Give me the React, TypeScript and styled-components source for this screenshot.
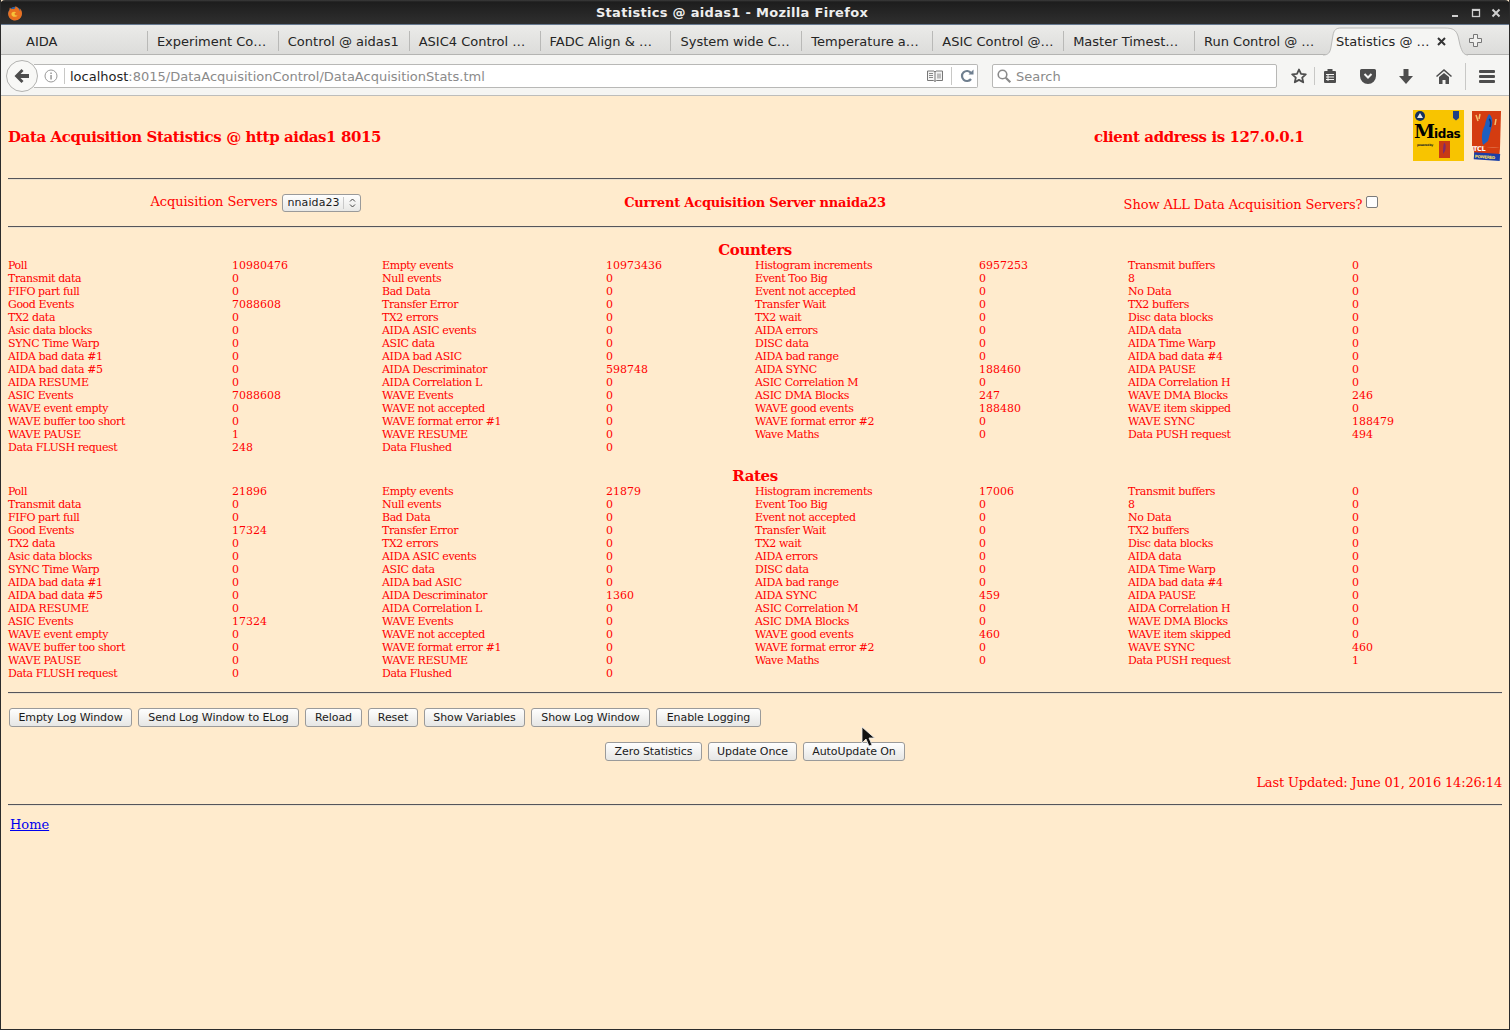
import React from "react";
import styled, { createGlobalStyle } from "styled-components";

const Global = createGlobalStyle`
  html, body { margin: 0; padding: 0; background: #2a2a2a; }
  #root { width: 1510px; height: 1030px; overflow: hidden; }
`;

const Win = styled.div`
  position: relative;
  box-sizing: border-box;
  width: 1510px;
  height: 1030px;
  display: flex;
  flex-direction: column;
  border-left: 1px solid #2b2b2b;
  border-right: 1px solid #2b2b2b;
  border-bottom: 1px solid #2b2b2b;
  background: #ffebcd;
  overflow: hidden;
  font-family: "DejaVu Sans", sans-serif;
`;
const TitleBar = styled.div`
  height: 25px;
  flex: none;
  box-sizing: border-box;
  margin: 0 -1px;
  padding: 1px 9px 0 7px;
  display: grid;
  grid-template-columns: 16px 1fr 54px;
  align-items: center;
  background: linear-gradient(#3c3c3c 0, #1d1d1d 2px, #2f2f2f 100%);
  border-bottom: 1px solid #66788f;
  border-radius: 5px 5px 0 0;
  color: #eeeeee;
`;
const Title = styled.div`
  text-align: center;
  font-weight: 700;
  font-size: 13px;
  padding-right: 6px;
  letter-spacing: 0.3px;
`;
const WinButtons = styled.div`
  display: flex;
  justify-content: space-between;
  align-items: center;
  padding-left: 4px;
`;
const TabStrip = styled.div`
  height: 30px;
  flex: none;
  box-sizing: border-box;
  display: flex;
  align-items: stretch;
  padding-left: 15px;
  background: linear-gradient(#ebebe9, #dcdcda);
  border-bottom: 1px solid #b4b4b2;
  position: relative;
`;
const Tab = styled.div<{ $last?: boolean }>`
  width: 130.9px;
  box-sizing: border-box;
  padding: 3px 0 0 9px;
  display: flex;
  align-items: center;
  font-size: 13px;
  color: #252525;
  white-space: nowrap;
  overflow: hidden;
  position: relative;
  &:first-child {
    width: 131.9px;
    padding-left: 10px;
  }
  &::after {
    content: "";
    display: ${(p) => (p.$last ? "none" : "block")};
    position: absolute;
    right: 0;
    top: 6px;
    bottom: 3px;
    width: 1px;
    background: #b9b9b7;
  }
`;
const ActiveTab = styled.div`
  width: 134px;
  box-sizing: border-box;
  padding: 3px 14px 0 10px;
  display: flex;
  align-items: center;
  justify-content: space-between;
  font-size: 13px;
  color: #252525;
  white-space: nowrap;
  position: relative;
`;
const TabShape = styled.svg`
  position: absolute;
  left: -3px;
  top: 2px;
`;
const TabLabel = styled.span`
  position: relative;
`;
const TabClose = styled.svg`
  position: relative;
`;
const NewTab = styled.div`
  width: 31px;
  display: flex;
  align-items: center;
  justify-content: center;
  padding-top: 2px;
`;
const NavBar = styled.div`
  height: 41px;
  flex: none;
  box-sizing: border-box;
  display: flex;
  align-items: center;
  padding: 2px 0 0 5px;
  background: #f5f5f3;
  border-bottom: 1px solid #bdbdbb;
`;
const BackCircle = styled.div`
  width: 32px;
  height: 32px;
  flex: none;
  box-sizing: border-box;
  border-radius: 50%;
  border: 1px solid #b2b2b0;
  background: #f8f8f6;
  display: flex;
  align-items: center;
  justify-content: center;
  z-index: 1;
`;
const UrlBar = styled.div`
  margin-left: -4px;
  width: 944px;
  height: 24px;
  box-sizing: border-box;
  display: flex;
  align-items: center;
  background: #fff;
  border: 1px solid #b8b8b6;
  border-left: none;
  border-radius: 0 2px 2px 0;
  padding-left: 10px;
  font-size: 13px;
  white-space: nowrap;
`;
const Host = styled.span`
  color: #1e1e1e;
`;
const Path = styled.span`
  color: #8a8a8a;
`;
const Sep = styled.div<{ $h?: number; $m?: string }>`
  width: 1px;
  height: ${(p) => p.$h ?? 18}px;
  background: #c8c8c6;
  flex: none;
  margin: ${(p) => p.$m ?? "0"};
`;
const UrlText = styled.div`
  flex: 1;
  padding-left: 5px;
`;
const SearchBox = styled.div`
  margin-left: 14px;
  width: 285px;
  height: 24px;
  box-sizing: border-box;
  display: flex;
  align-items: center;
  gap: 4px;
  padding-left: 3px;
  background: #fff;
  border: 1px solid #b8b8b6;
  border-radius: 2px;
  font-size: 13px;
  color: #8a8a8a;
`;
const Tools = styled.div`
  display: flex;
  align-items: center;
  height: 100%;
  padding-left: 7px;
`;
const ToolSlot = styled.div<{ $w: number; $pl?: number }>`
  width: ${(p) => p.$w}px;
  box-sizing: border-box;
  padding-left: ${(p) => p.$pl ?? 0}px;
  display: flex;
  justify-content: center;
  align-items: center;
  flex: none;
`;

const Page = styled.div`
  flex: 1;
  padding: 0 7px;
  font-family: "DejaVu Serif", serif;
  color: #ff0000;
`;
const Header = styled.div`
  height: 82px;
  display: grid;
  grid-template-columns: 1086px 1fr auto;
  align-items: center;
  font-weight: 700;
  font-size: 15px;
  letter-spacing: -0.4px;
`;
const Logos = styled.div`
  display: flex;
  gap: 7px;
  align-items: flex-start;
  margin-bottom: 4px;
`;
const Rule = styled.hr`
  margin: 0;
  border: none;
  height: 1px;
  background: #55555a;
  box-shadow: 0 1px 0 #ece0cc;
`;
const ServerRow = styled.div`
  height: 47px;
  display: grid;
  grid-template-columns: repeat(3, 1fr);
  align-items: center;
  font-size: 13px;
`;
const ServerCell = styled.div<{ $shift?: number; $pr?: number }>`
  display: flex;
  justify-content: center;
  align-items: center;
  gap: 5px;
  white-space: nowrap;
  letter-spacing: -0.1px;
  padding-right: ${(p) => p.$pr ?? 0}px;
  transform: translateY(${(p) => p.$shift ?? 0}px);
`;
const Strong = styled.b`
  font-size: 13px;
  letter-spacing: -0.2px;
`;
const Select = styled.div`
  width: 79px;
  height: 18px;
  box-sizing: border-box;
  display: flex;
  align-items: center;
  font-family: "DejaVu Sans", sans-serif;
  font-size: 11px;
  letter-spacing: 0.1px;
  color: #1a1a1a;
  background: linear-gradient(#fefefe, #e8e8e6);
  border: 1px solid #9a9a9a;
  border-radius: 3px;
  padding-left: 4px;
  transform: translateY(1px);
`;
const SelectSep = styled.div`
  width: 1px;
  height: 12px;
  background: #c9c9c9;
  margin: 0 5px 0 3px;
`;
const Check = styled.div`
  width: 12px;
  height: 12px;
  box-sizing: border-box;
  background: #fdfdfd;
  border: 1px solid #7b7b7b;
  border-radius: 2px;
  transform: translateY(-3px);
  margin-left: -1px;
`;
const Heading = styled.div`
  text-align: center;
  font-weight: 700;
  font-size: 15px;
  letter-spacing: -0.4px;
  line-height: 18px;
`;
const Stats = styled.div`
  display: grid;
  grid-template-columns: 224px 150px 224px 149px 224px 149px 224px 150px;
  grid-auto-rows: 13px;
  font-size: 11px;
  line-height: 13px;
  white-space: nowrap;
`;
const StatLabel = styled.span`
  letter-spacing: -0.4px;
`;
const CountersBlock = styled.div`
  padding-top: 14px;
`;
const RatesBlock = styled.div`
  padding: 13px 0 12px;
`;
const ButtonRow = styled.div<{ $center?: boolean }>`
  display: flex;
  gap: 6px;
  justify-content: ${(p) => (p.$center ? "center" : "flex-start")};
  padding-left: ${(p) => (p.$center ? 0 : 1)}px;
`;
const Btn = styled.div<{ $w: number }>`
  width: ${(p) => p.$w}px;
  height: 19px;
  box-sizing: border-box;
  display: flex;
  align-items: center;
  justify-content: center;
  font-family: "DejaVu Sans", sans-serif;
  font-size: 11px;
  letter-spacing: -0.08px;
  color: #1a1a1a;
  background: linear-gradient(#fefefe, #e6e6e4);
  border: 1px solid #9a9a9a;
  border-radius: 3px;
  white-space: nowrap;
`;
const Buttons = styled.div`
  display: flex;
  flex-direction: column;
  gap: 15px;
  padding-top: 15px;
`;
const Updated = styled.div`
  text-align: right;
  font-size: 13px;
  letter-spacing: -0.17px;
  line-height: 16px;
  padding-top: 14px;
  height: 43px;
  box-sizing: border-box;
`;
const HomeLink = styled.a`
  display: block;
  margin: 12px 0 0 2px;
  font-size: 13px;
  line-height: 16px;
  color: #0000ee;
  text-decoration: underline;
`;
const Cursor = styled.svg`
  position: absolute;
  left: 860px;
  top: 726px;
`;

const counters: [string, string][][] = [
  [["Poll", "10980476"], ["Empty events", "10973436"], ["Histogram increments", "6957253"], ["Transmit buffers", "0"]],
  [["Transmit data", "0"], ["Null events", "0"], ["Event Too Big", "0"], ["8", "0"]],
  [["FIFO part full", "0"], ["Bad Data", "0"], ["Event not accepted", "0"], ["No Data", "0"]],
  [["Good Events", "7088608"], ["Transfer Error", "0"], ["Transfer Wait", "0"], ["TX2 buffers", "0"]],
  [["TX2 data", "0"], ["TX2 errors", "0"], ["TX2 wait", "0"], ["Disc data blocks", "0"]],
  [["Asic data blocks", "0"], ["AIDA ASIC events", "0"], ["AIDA errors", "0"], ["AIDA data", "0"]],
  [["SYNC Time Warp", "0"], ["ASIC data", "0"], ["DISC data", "0"], ["AIDA Time Warp", "0"]],
  [["AIDA bad data #1", "0"], ["AIDA bad ASIC", "0"], ["AIDA bad range", "0"], ["AIDA bad data #4", "0"]],
  [["AIDA bad data #5", "0"], ["AIDA Descriminator", "598748"], ["AIDA SYNC", "188460"], ["AIDA PAUSE", "0"]],
  [["AIDA RESUME", "0"], ["AIDA Correlation L", "0"], ["ASIC Correlation M", "0"], ["AIDA Correlation H", "0"]],
  [["ASIC Events", "7088608"], ["WAVE Events", "0"], ["ASIC DMA Blocks", "247"], ["WAVE DMA Blocks", "246"]],
  [["WAVE event empty", "0"], ["WAVE not accepted", "0"], ["WAVE good events", "188480"], ["WAVE item skipped", "0"]],
  [["WAVE buffer too short", "0"], ["WAVE format error #1", "0"], ["WAVE format error #2", "0"], ["WAVE SYNC", "188479"]],
  [["WAVE PAUSE", "1"], ["WAVE RESUME", "0"], ["Wave Maths", "0"], ["Data PUSH request", "494"]],
  [["Data FLUSH request", "248"], ["Data Flushed", "0"]],
];
const rateValues: string[][] = [
  ["21896", "21879", "17006", "0"],
  ["0", "0", "0", "0"],
  ["0", "0", "0", "0"],
  ["17324", "0", "0", "0"],
  ["0", "0", "0", "0"],
  ["0", "0", "0", "0"],
  ["0", "0", "0", "0"],
  ["0", "0", "0", "0"],
  ["0", "1360", "459", "0"],
  ["0", "0", "0", "0"],
  ["17324", "0", "0", "0"],
  ["0", "0", "460", "0"],
  ["0", "0", "0", "460"],
  ["0", "0", "0", "1"],
  ["0", "0"],
];
const rates: [string, string][][] = counters.map((row, r) =>
  row.map((c, i) => [c[0], rateValues[r][i]] as [string, string])
);

const StatsGrid = ({ rows }: { rows: [string, string][][] }) => (
  <Stats>
    {rows.flat().map(([k, v], i) => (
      <React.Fragment key={i}>
        <StatLabel>{k}</StatLabel>
        <span>{v}</span>
      </React.Fragment>
    ))}
  </Stats>
);

const tabs = [
  "AIDA", "Experiment Co…", "Control @ aidas1", "ASIC4 Control …", "FADC Align & …",
  "System wide C…", "Temperature a…", "ASIC Control @…", "Master Timest…", "Run Control @ …",
];

const Firefox = () => (
  <svg width="16" height="16" viewBox="0 0 16 16">
    <circle cx="8" cy="8.500" r="6.800" fill="#2f5f9e" />
    <path d="M3 2.500c-.5 1-.6 2-.3 2.600C1.400 6.500 1 8 1.200 9.500 1.700 13 4.500 15.500 8 15.500c3.800 0 7-3 7-7 0-2-.8-3.800-2-5 .4 1.200.3 2.200 0 2.800C12.300 4.300 11 2.500 8.500 1c.2 1.500-.6 2.600-1.700 3.300-.7-.3-1.600-.3-2.300 0-.7-.4-1.300-1-1.500-1.800z" fill="#e8701f" />
    <path d="M5 7.500c1.500-1 3.500-.8 4.500.4C8.500 7.500 7.500 8 7.600 9c.1 1.200 1.700 2 3 1.300-1 1.800-4 2-5.300.6C4.200 10 4.200 8.500 5 7.500z" fill="#f6c33a" />
  </svg>
);

const Midas = () => (
  <svg width="51" height="51" viewBox="0 0 51 51">
    <rect width="51" height="51" fill="#f8c400" />
    <circle cx="7" cy="6" r="5" fill="#13315f" />
    <path d="M4 8l3-5 3 5z" fill="#e8e8e8" />
    <path d="M40 1h6v7l-3 2.500L40 8z" fill="#1f3f83" />
    <text x="1" y="27.500" fontFamily="'DejaVu Serif', serif" fontWeight="700" fontSize="19" fill="#000">M</text>
    <text x="21" y="27.500" fontFamily="'DejaVu Sans', sans-serif" fontWeight="700" fontSize="12" fill="#000">idas</text>
    <text x="4" y="36" fontFamily="'DejaVu Sans', sans-serif" fontWeight="700" fontSize="3" fill="#222">powered by</text>
    <rect x="26" y="31" width="11" height="17" fill="#c83a14" />
    <path d="M31 33c2 0 2 5 1 8l-2 3c0-4 0-8 1-11z" fill="#7d2a6c" />
  </svg>
);

const Tcl = () => (
  <svg width="31" height="51" viewBox="0 0 31 51">
    <path d="M1 1h29l-1 37-28-2z" fill="#d43c10" />
    <path d="M2 36l27 2-1 12-24-3z" fill="#d43c10" />
    <path d="M18 4c4 3 4 9 2 15l-3 12-5 4c-2-8-1-14 2-20 .6-4 2-8 4-11z" fill="#1e5fc0" />
    <path d="M18 9c2 1 2 5 1 8" stroke="#0c2c70" strokeWidth="1.500" fill="none" />
    <path d="M5 5l2 6M9 4l-1 5M25 9l-1 6" stroke="#f4c070" strokeWidth="1.500" />
    <text x="2" y="41" fontFamily="'DejaVu Sans', sans-serif" fontWeight="700" fontSize="6.500" fill="#fff">TCL</text>
    <rect x="3" y="43" width="26" height="7" fill="#1a3fa8" transform="rotate(4 15 46)" />
    <text x="4" y="48.500" fontFamily="'DejaVu Sans', sans-serif" fontWeight="700" fontSize="4" fill="#ffe060" transform="rotate(4 15 46)">POWERED</text>
  </svg>
);

const grey = "#4d4d4d";

export default function App() {
  return (
    <>
      <Global />
      <Win>
        <TitleBar>
          <Firefox />
          <Title>Statistics @ aidas1 - Mozilla Firefox</Title>
          <WinButtons>
            <svg width="10" height="10" viewBox="0 0 10 10"><rect x="1" y="7" width="6" height="2" fill="#cfcfcf" /></svg>
            <svg width="10" height="10" viewBox="0 0 10 10"><rect x="1.500" y="1.500" width="7" height="7" fill="none" stroke="#cfcfcf" strokeWidth="1.300" /><rect x="1" y="1" width="8" height="2" fill="#cfcfcf" /></svg>
            <svg width="10" height="10" viewBox="0 0 10 10"><path d="M1.500 1.500l7 7M8.500 1.500l-7 7" stroke="#cfcfcf" strokeWidth="2" /></svg>
          </WinButtons>
        </TitleBar>
        <TabStrip>
          {tabs.map((t, i) => (
            <Tab key={t} $last={i === tabs.length - 1}>{t}</Tab>
          ))}
          <ActiveTab>
            <TabShape width="145" height="29" viewBox="0 0 145 29">
              <path d="M0 28C5 28 7 26 8 20L10 8C11 3 13 1 18 1L122 1C130 1 133 3 135 9L137 18C139 25 141 28 145 28" fill="#f5f5f3" stroke="#b9b9b7" />
            </TabShape>
            <TabLabel>Statistics @ …</TabLabel>
            <TabClose width="9" height="9" viewBox="0 0 9 9"><path d="M1 1l7 7M8 1l-7 7" stroke="#333" strokeWidth="2" /></TabClose>
          </ActiveTab>
          <NewTab>
            <svg width="13" height="13" viewBox="0 0 13 13"><path d="M4.500.5h4v4h4v4h-4v4h-4v-4h-4v-4h4z" fill="#f0f0ee" stroke="#777" /></svg>
          </NewTab>
        </TabStrip>
        <NavBar>
          <BackCircle>
            <svg width="16" height="14" viewBox="0 0 16 14"><path d="M7.500 0l2 2-3 3H15v4H6.500l3 3-2 2L.5 7z" fill={grey} /></svg>
          </BackCircle>
          <UrlBar>
            <svg width="14" height="14" viewBox="0 0 14 14"><circle cx="7" cy="7" r="6" fill="none" stroke="#999" /><rect x="6.400" y="6" width="1.300" height="4.500" fill="#888" /><rect x="6.400" y="3.500" width="1.300" height="1.500" fill="#888" /></svg>
            <Sep $h={16} $m="0 0 0 6px" />
            <UrlText><Host>localhost</Host><Path>:8015/DataAcquisitionControl/DataAcquisitionStats.tml</Path></UrlText>
            <svg width="16" height="12" viewBox="0 0 16 12"><path d="M.5 1h6.500l1 1 1-1h6.500v9.500H9.500l-1.500 1-1.500-1H.5z" fill="#f4f4f4" stroke="#777" /><path d="M2 3.500h4M2 5.500h4M2 7.500h4" stroke="#888" /><path d="M8 2v9" stroke="#777" /><path d="M10 3.500h4v5h-4z" fill="#bbb" /></svg>
            <Sep $h={18} $m="0 0 0 8px" />
            <ToolSlot $w={25} $pl={4}>
              <svg width="14" height="14" viewBox="0 0 14 14"><path d="M11 10a5 5 0 1 1 0-6" fill="none" stroke="#6f7f8f" strokeWidth="2.200" /><path d="M8.500 5.500h5v-5z" fill="#6f7f8f" /></svg>
            </ToolSlot>
          </UrlBar>
          <SearchBox>
            <svg width="16" height="16" viewBox="0 0 16 16"><circle cx="6.500" cy="6.500" r="4.300" fill="none" stroke="#8a8a8a" strokeWidth="1.600" /><path d="M9.800 9.800l4.500 4.500" stroke="#8a8a8a" strokeWidth="2.200" /></svg>
            <span>Search</span>
          </SearchBox>
          <Tools>
            <ToolSlot $w={30}>
              <svg width="16" height="16" viewBox="0 0 16 16"><path d="M8 1.500l2 4.400 4.800.5-3.600 3.200 1 4.700L8 11.900l-4.200 2.400 1-4.700L1.200 6.400 6 5.900z" fill="none" stroke={grey} strokeWidth="1.800" strokeLinejoin="round" /></svg>
            </ToolSlot>
            <Sep $h={18} />
            <ToolSlot $w={30}>
              <svg width="14" height="16" viewBox="0 0 14 16"><rect x="1" y="3" width="12" height="12" rx="1" fill={grey} /><rect x="4.500" y="1" width="5" height="4" fill={grey} /><path d="M3 6.500h8M3 9h8M3 11.500h8" stroke="#f5f5f3" strokeWidth="1" /><path d="M5 6v7" stroke="#f5f5f3" /></svg>
            </ToolSlot>
            <ToolSlot $w={46}>
              <svg width="16" height="15" viewBox="0 0 16 15"><path d="M1.500 0h13A1.500 1.500 0 0 1 16 1.500V7a8 8 0 0 1-16 0V1.500A1.500 1.500 0 0 1 1.500 0z" fill={grey} /><path d="M4.500 5L8 8.500 11.500 5" fill="none" stroke="#f5f5f3" strokeWidth="2" /></svg>
            </ToolSlot>
            <ToolSlot $w={30}>
              <svg width="14" height="15" viewBox="0 0 14 15"><path d="M4.500 0h5v7H14l-7 8-7-8h4.500z" fill={grey} /></svg>
            </ToolSlot>
            <ToolSlot $w={46}>
              <svg width="16" height="15" viewBox="0 0 16 15"><path d="M8 0l8 7-1 1-7-6-7 6-1-1z" fill={grey} /><path d="M3 8l5-4 5 4v7H9.500v-4h-3v4H3z" fill={grey} /></svg>
            </ToolSlot>
            <Sep $h={27} $m="0 0 0 -2px" />
            <ToolSlot $w={42}>
              <svg width="16" height="13" viewBox="0 0 16 13"><rect width="16" height="3" rx="1" fill={grey} /><rect y="5" width="16" height="3" rx="1" fill={grey} /><rect y="10" width="16" height="3" rx="1" fill={grey} /></svg>
            </ToolSlot>
          </Tools>
        </NavBar>
        <Page>
          <Header>
            <span>Data Acquisition Statistics @ http aidas1 8015</span>
            <span>client address is 127.0.0.1</span>
            <Logos><Midas /><Tcl /></Logos>
          </Header>
          <Rule />
          <ServerRow>
            <ServerCell $shift={-1} $pr={2}>
              <span>Acquisition Servers</span>
              <Select>
                nnaida23
                <SelectSep />
                <svg width="7" height="10" viewBox="0 0 7 10"><path d="M1 3.500L3.500 1 6 3.500M1 6.500L3.500 9 6 6.500" fill="none" stroke="#444" /></svg>
              </Select>
            </ServerCell>
            <ServerCell><Strong>Current Acquisition Server nnaida23</Strong></ServerCell>
            <ServerCell $shift={2} $pr={4}>
              <span>Show ALL Data Acquisition Servers?</span>
              <Check />
            </ServerCell>
          </ServerRow>
          <Rule />
          <CountersBlock>
            <Heading>Counters</Heading>
            <StatsGrid rows={counters} />
          </CountersBlock>
          <RatesBlock>
            <Heading>Rates</Heading>
            <StatsGrid rows={rates} />
          </RatesBlock>
          <Rule />
          <Buttons>
            <ButtonRow>
              <Btn $w={123}>Empty Log Window</Btn>
              <Btn $w={161}>Send Log Window to ELog</Btn>
              <Btn $w={57}>Reload</Btn>
              <Btn $w={50}>Reset</Btn>
              <Btn $w={101}>Show Variables</Btn>
              <Btn $w={119}>Show Log Window</Btn>
              <Btn $w={105}>Enable Logging</Btn>
            </ButtonRow>
            <ButtonRow $center>
              <Btn $w={97}>Zero Statistics</Btn>
              <Btn $w={89}>Update Once</Btn>
              <Btn $w={102}>AutoUpdate On</Btn>
            </ButtonRow>
          </Buttons>
          <Updated>Last Updated: June 01, 2016 14:26:14</Updated>
          <Rule />
          <HomeLink href="#">Home</HomeLink>
        </Page>
        <Cursor width="16" height="22" viewBox="0 0 16 22">
          <path d="M1 1v16l4-4 3 7 3-1-3-7h5.500z" fill="#111" stroke="#eee" strokeWidth="0.800" />
        </Cursor>
      </Win>
    </>
  );
}
